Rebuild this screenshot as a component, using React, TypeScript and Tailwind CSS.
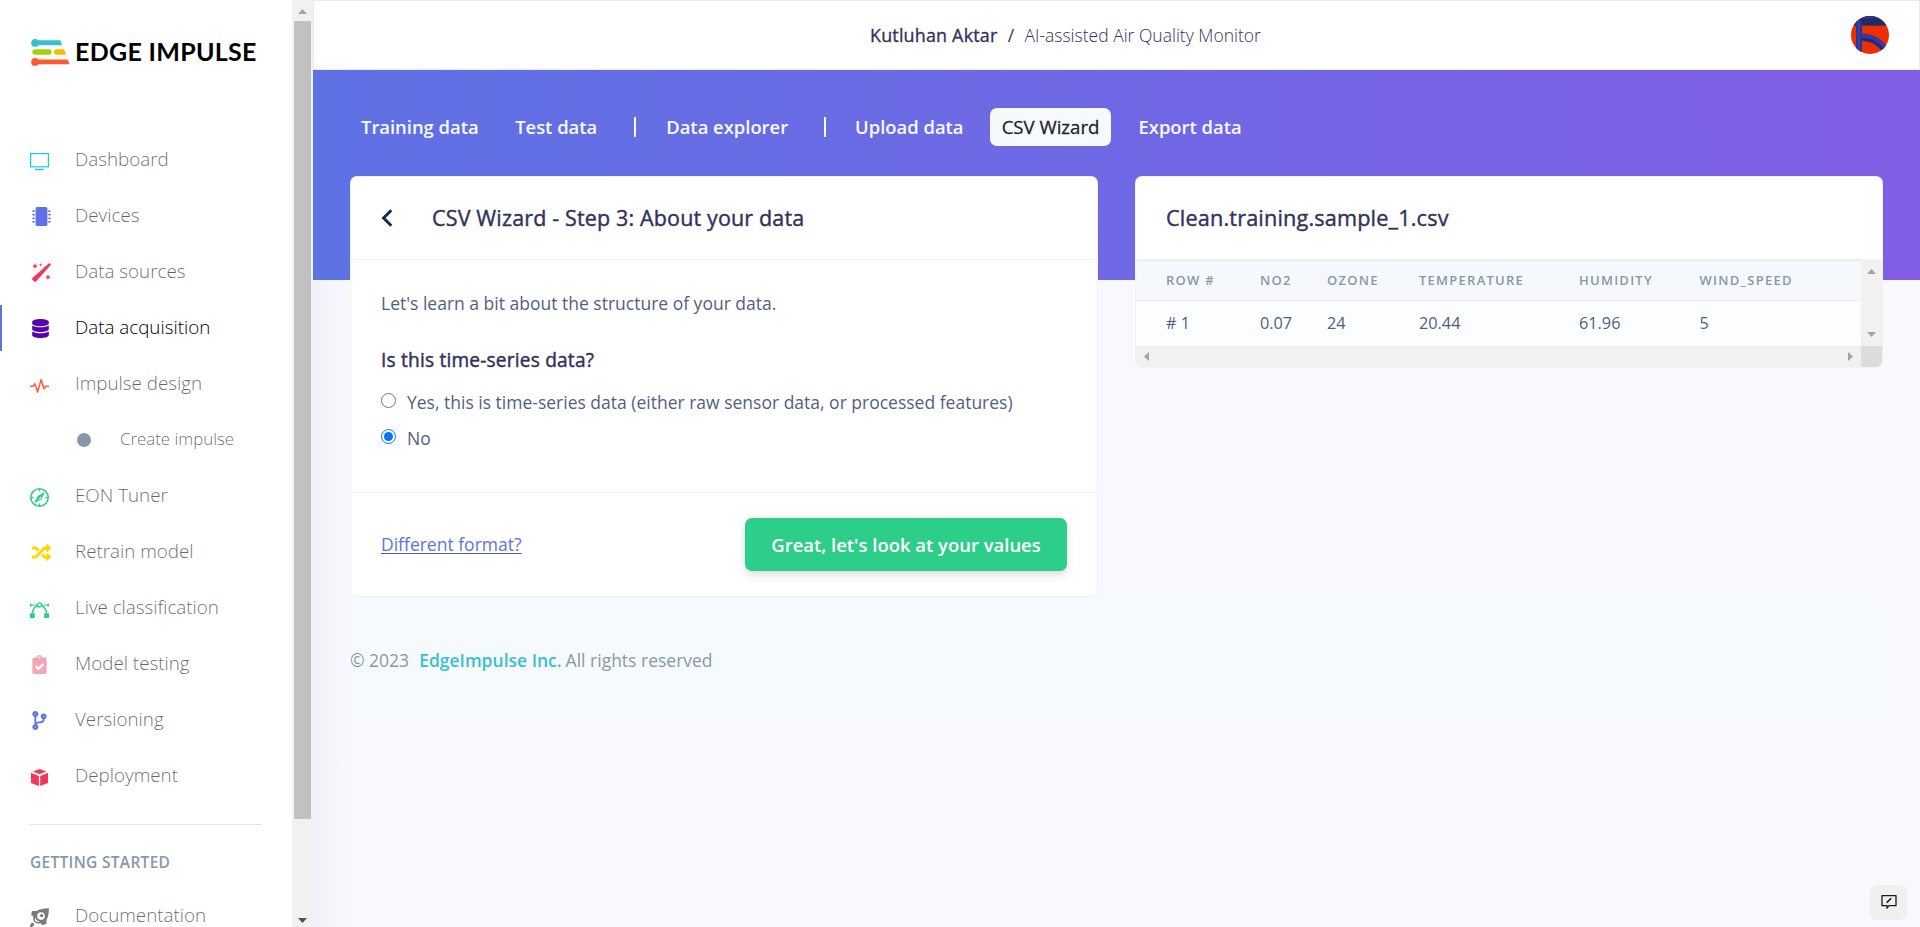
import type { ReactNode } from "react";
import {
  FaClipboardCheck,
  FaCodeBranch,
  FaDatabase,
  FaMicrochip,
  FaRandom,
} from "react-icons/fa";

const TvIcon = () => (
  <svg className="mt-[3px] h-[18px] w-[19px] shrink-0" viewBox="0 0 19 18" fill="none" stroke="#11cdef">
    <rect x="0.6" y="0.6" width="17.8" height="13.2" strokeWidth="1.2" />
    <path d="M5 16.6h9" strokeWidth="1.3" />
  </svg>
);

const WandIcon = () => (
  <svg className="ml-[2px] size-[19px] shrink-0" viewBox="0 0 19 19" fill="#f5365c">
    <path d="M17.3 0 19 1.700 4 18.500a1.200 1.200 0 0 1-1.700 0L.4 16.700a1.200 1.200 0 0 1 0-1.700Z" />
    <path d="m3 .2.900 2 2 .9-2 .9L3 6l-.9-2-2-.9 2-.9ZM8.500 0l.5 1.200 1.200.5L9 2.200l-.5 1.200L8 2.200l-1.200-.5L8 1.200ZM16 11.200l.9 2 2 .9-2 .9-.9 2-.9-2-2-.9 2-.9Z" />
  </svg>
);

const PulseIcon = () => (
  <svg className="mt-[3px] h-[16px] w-[19px] shrink-0" viewBox="0 0 19 16" fill="none" stroke="#fb6340" strokeWidth="1.6" strokeLinejoin="round">
    <path d="M0 8.3h3.1L4.9 5.8 7.6 14 11.1 1.6l2.8 9.2 1.9-2.5H19" />
  </svg>
);

const CompassIcon = () => (
  <svg className="mt-[3px] h-[19px] w-[19px] shrink-0" viewBox="0 0 19 19" fill="none" stroke="#2dce89">
    <circle cx="9.5" cy="9.5" r="8.7" strokeWidth="1.6" />
    <path d="M9.5 1v2.6M9.5 15.4V18M1 9.5h2.6M15.4 9.5H18" strokeWidth="1.2" />
    <path d="M13.9 5.1 8 8 5.1 13.9Z" fill="#2dce89" strokeWidth="0.8" strokeLinejoin="round" />
    <path d="M13.9 5.1 11 11 5.1 13.9Z" strokeWidth="1.1" strokeLinejoin="round" />
  </svg>
);

const VectorIcon = () => (
  <svg className="mt-[3px] h-[16px] w-[19px] shrink-0" viewBox="0 0 19 16" fill="none" stroke="#2dce89">
    <circle cx="9.5" cy="2.9" r="2.1" strokeWidth="1.3" />
    <path d="M1 3.1h6.4M11.6 3.1H18" strokeWidth="1" />
    <path d="M0 1.7h1.6v2.8H0zM17.4 1.7H19v2.8h-1.6zM0 11.2h4.8V16H0zM14.2 11.2H19V16h-4.8z" fill="#2dce89" stroke="none" />
    <path d="M2.4 11.5C2.6 7.6 4.6 4.8 7.6 3.9M16.6 11.5c-.2-3.9-2.2-6.7-5.2-7.6" strokeWidth="1.5" />
  </svg>
);

const BoxIcon = () => (
  <svg className="ml-px mt-[3px] h-[17px] w-[17px] shrink-0" viewBox="0 0 17 17" fill="#f5365c">
    <path d="M8.5 0 15.2 2.5 8.5 5.3 1.8 2.5ZM0 3.7l7.9 3.3v10L.5 14.3a.8.8 0 0 1-.5-.8ZM17 3.7 9.2 7v10l7.3-2.7a.8.8 0 0 0 .5-.8Z" />
  </svg>
);

const RocketIcon = () => (
  <svg className="mt-[3px] h-[19px] w-[19px] shrink-0" viewBox="0 0 19 19" fill="#7a7a7a">
    <path
      fillRule="evenodd"
      d="M18.9.2C13.6.2 9.6 1 6.6 2.9L1.9 2.9 1.2 7.6l2.1.4c-.5 2.5-.1 4.7 1.3 6.2 1.8 1.4 4.3 1.700 6.5 1.100l.7 2 4.600-1.300.1-4.300C18.200 9.200 18.900 5.400 18.900.2ZM11 4.300a3.800 3.800 0 1 1 0 7.600 3.800 3.800 0 0 1 0-7.600ZM5.200 9.300c.4 2.300 2 3.900 4.600 4.400-2.200.5-3.500.2-4.300-.5-.7-.9-.8-2.300-.3-3.900Z"
    />
    <circle cx="11.6" cy="7.6" r="1.7" />
    <path d="M.1 18.9c0-2 .6-3.700 2-4.200 1.500-.2 2.400 1 2 2.200-.5 1.400-2 2-4 2Z" />
  </svg>
);

const navItems: { label: string; icon: ReactNode; active?: boolean; sub?: boolean }[] = [
  { label: "Dashboard", icon: <TvIcon /> },
  { label: "Devices", icon: <FaMicrochip className="ml-[2px] size-[19px] shrink-0 text-[#5e72e4]" /> },
  { label: "Data sources", icon: <WandIcon /> },
  { label: "Data acquisition", icon: <FaDatabase className="ml-[2px] h-[19px] w-[17px] shrink-0 text-[#5603ad]" />, active: true },
  { label: "Impulse design", icon: <PulseIcon /> },
  { label: "Create impulse", icon: null, sub: true },
  { label: "EON Tuner", icon: <CompassIcon /> },
  { label: "Retrain model", icon: <FaRandom className="ml-[2px] size-[19px] shrink-0 text-[#ffd600]" /> },
  { label: "Live classification", icon: <VectorIcon /> },
  { label: "Model testing", icon: <FaClipboardCheck className="ml-[2px] h-[19px] w-[15px] shrink-0 text-[#f3a4b5]" /> },
  { label: "Versioning", icon: <FaCodeBranch className="ml-[2px] h-[19px] w-[15px] shrink-0 text-[#5e72e4]" /> },
  { label: "Deployment", icon: <BoxIcon /> },
];

function Logo() {
  return (
    <div className="flex h-[132px] shrink-0 items-start pl-[31px] pt-[36px]">
      <svg className="mt-[3px] h-[27px] w-[39px]" viewBox="0 0 39 27">
        <circle cx="4.1" cy="3.9" r="3.9" fill="#3bbfce" />
        <path d="M4 1.2h25.3l1.8 5H4Z" fill="#3bbfce" />
        <rect x="1.3" y="10.3" width="19.4" height="5.5" rx="2.7" fill="#a4d00c" />
        <path d="M25.7 10.3h7.3l2.1 5.5h-9.4a2.75 2.75 0 0 1 0-5.5Z" fill="#ffb900" />
        <circle cx="4.1" cy="22.9" r="3.9" fill="#ff5a30" />
        <path d="M4 20.4h32.7l1.9 4.9H4Z" fill="#ff5a30" />
      </svg>
      <span className="-mt-px ml-[5px] whitespace-nowrap font-['Lato',sans-serif] text-[25px] font-bold leading-[33px] tracking-[0.3px] text-black">EDGE IMPULSE</span>
    </div>
  );
}

function NavRow({ label, icon, active, sub }: { label: string; icon: ReactNode; active?: boolean; sub?: boolean }) {
  if (sub) {
    return (
      <div className="flex h-14 shrink-0 items-center pl-[77px]">
        <span className="size-[14px] rounded-full bg-[#8898aa]" />
        <span className="ml-[29px] pb-[2px] text-[16.875px] font-light text-black/60">{label}</span>
      </div>
    );
  }
  return (
    <div className="flex h-14 shrink-0 items-center">
      <span className={active ? "h-[46px] w-[2px] bg-[#5e72e4]" : "h-[46px] w-[2px]"} />
      <span className="flex w-[73px] pl-[28px]">{icon}</span>
      <span className={active ? "pb-[2px] text-[18.8px] font-light text-black" : "pb-[2px] text-[18.8px] font-light text-black/60"}>{label}</span>
    </div>
  );
}

function Sidebar() {
  return (
    <aside className="flex h-full w-[292px] shrink-0 flex-col overflow-hidden bg-white">
      <Logo />
      {navItems.map((item) => (
        <NavRow key={item.label} {...item} />
      ))}
      <hr className="ml-[30px] mr-[30px] mt-5 shrink-0 border-[#e5e5e5]" />
      <div className="mt-[26px] shrink-0 pl-[30px] text-[15.5px] font-semibold uppercase leading-[22px] tracking-[0.3px] text-[#8898aa]">Getting started</div>
      <div className="mt-[15px] shrink-0">
        <NavRow label="Documentation" icon={<RocketIcon />} />
      </div>
    </aside>
  );
}

function SidebarScrollbar() {
  return (
    <div className="flex h-full w-[21px] shrink-0 flex-col bg-[#f1f1f1]">
      <svg className="h-[21px] w-[21px] shrink-0" viewBox="0 0 21 21">
        <path d="M6 14h9L10.5 9Z" fill="#a3a3a3" />
      </svg>
      <div className="ml-[2px] h-[798px] w-[17px] bg-[#c1c1c1]" />
      <svg className="mt-auto h-[21px] w-[21px] shrink-0" viewBox="0 0 21 21">
        <path d="M6 12h9l-4.5 5Z" fill="#505050" />
      </svg>
    </div>
  );
}

function TopBar() {
  return (
    <header className="flex h-[70px] shrink-0 items-center border border-[#e9ecef] bg-white pr-[30px] text-[17.5px] text-[#32325d]">
      <div className="flex flex-1 items-baseline whitespace-nowrap pl-[556px]">
        <span className="text-[17.9px] tracking-[0.2px] [-webkit-text-stroke:0.35px]">Kutluhan Aktar</span>
        <span className="w-[27px] text-center">/</span>
        <span className="font-light">AI-assisted Air Quality Monitor</span>
      </div>
      <svg className="size-[38px]" viewBox="0 0 38 38">
        <defs>
          <clipPath id="avatar">
            <circle cx="19" cy="19" r="19" />
          </clipPath>
        </defs>
        <g clipPath="url(#avatar)">
          <rect width="38" height="38" fill="#ec2f00" />
          <rect width="38" height="9.7" fill="#232b66" />
          <rect width="38" height="2.6" fill="#2c3598" />
          <path d="M10 21.5c9-.6 17.5 3.3 23.5 11.5" fill="none" stroke="#222a78" strokeWidth="7" />
          <path d="M10 20c9-.6 18 3.3 24 11.5" fill="none" stroke="#3039ae" strokeWidth="3.5" />
          <rect x="5" y="5" width="6" height="33" fill="#2a3391" />
          <rect x="6.5" y="5" width="2.5" height="33" fill="#343eaa" />
        </g>
      </svg>
    </header>
  );
}

function Tab({ children, active }: { children: ReactNode; active?: boolean }) {
  return (
    <span
      className={
        active
          ? "ml-px mr-[2px] flex h-[38px] w-[121px] items-center justify-center rounded-[7px] bg-[#f7fafc] text-[18.6px] font-normal text-[#212529] [-webkit-text-stroke:0.3px]"
          : "flex h-[38px] items-center px-[11px] text-[#f7fafc]"
      }
    >
      {children}
    </span>
  );
}

function Tabs() {
  return (
    <nav className="flex h-[38px] items-center gap-[14.5px] whitespace-nowrap text-[18.4px] font-semibold">
      <Tab>Training data</Tab>
      <Tab>Test data</Tab>
      <span className="ml-[11px] mr-[5px] h-5 w-[2px] bg-[#f7fafc]" />
      <Tab>Data explorer</Tab>
      <span className="ml-[10px] mr-[4px] h-5 w-[2px] bg-[#f7fafc]" />
      <Tab>Upload data</Tab>
      <Tab active>CSV Wizard</Tab>
      <Tab>Export data</Tab>
    </nav>
  );
}

function WizardCard() {
  return (
    <section className="flex h-[421px] w-[748px] flex-col rounded-[7px] border border-black/5 bg-white">
      <div className="flex h-[83px] items-center border-b border-black/5 pl-[30px] text-[#32325d]">
        <svg className="h-[18px] w-[12px]" viewBox="0 0 12 18" fill="none" stroke="#172b4d" strokeWidth="3">
          <path d="M10.3 1.2 2.6 9l7.700 7.800" />
        </svg>
        <h3 className="ml-[39px] text-[21.5px] tracking-[0.15px] [-webkit-text-stroke:0.4px]">CSV Wizard - Step 3: About your data</h3>
      </div>
      <div className="flex h-[233px] flex-col border-b border-black/5 px-[30px] pt-[30px]">
        <p className="leading-[26px]">Let's learn a bit about the structure of your data.</p>
        <h4 className="mt-[31px] text-[19.1px] leading-[26px] tracking-[0.2px] text-[#32325d] [-webkit-text-stroke:0.45px]">Is this time-series data?</h4>
        <label className="mt-[16px] flex h-[26px] items-start leading-[26px]">
          <input type="radio" name="series" className="m-0 mt-[4px] size-[15px]" readOnly />
          <span className="ml-[11px]">Yes, this is time-series data (either raw sensor data, or processed features)</span>
        </label>
        <label className="mt-[10px] flex h-[26px] items-start leading-[26px]">
          <input type="radio" name="series" className="m-0 mt-[4px] size-[15px]" defaultChecked />
          <span className="ml-[11px]">No</span>
        </label>
      </div>
      <div className="flex flex-1 items-center justify-between px-[30px]">
        <a className="text-[#5e72e4] underline decoration-[#525f7f] decoration-1 underline-offset-2">Different format?</a>
        <button className="h-[53px] w-[322px] rounded-[7px] bg-[#2dce89] pt-px text-[18.45px] font-semibold text-white shadow-[0_5px_8px_rgba(50,50,93,0.11),0_1px_4px_rgba(0,0,0,0.08)]">
          Great, let's look at your values
        </button>
      </div>
    </section>
  );
}

const columns = ["Row #", "NO2", "ozone", "temperature", "humidity", "wind_speed"];
const values = ["# 1", "0.07", "24", "20.44", "61.96", "5"];

function SampleCard() {
  return (
    <section className="flex h-[192px] w-[748px] flex-col overflow-hidden rounded-[7px] border border-black/5 bg-white">
      <h3 className="flex h-[82px] shrink-0 items-center pl-[30px] text-[21.7px] tracking-[0.15px] text-[#32325d] [-webkit-text-stroke:0.4px]">Clean.training.sample_1.csv</h3>
      <div className="flex h-[87px] shrink-0 border-t border-black/5">
        <div className="flex-1">
          <div className="grid h-[41px] grid-cols-[94px_67px_92px_160px_120.5px_1fr] items-center border-y border-[#e9ecef] bg-[#f6f9fc] pl-[30px] text-[13px] font-semibold uppercase tracking-[1.25px] text-[#8898aa]">
            {columns.map((c) => (
              <span key={c}>{c}</span>
            ))}
          </div>
          <div className="grid h-[45px] grid-cols-[94px_67px_92px_160px_120.5px_1fr] items-center bg-[#fcfdff] pl-[30px] text-[16.25px]">
            {values.map((v) => (
              <span key={v}>{v}</span>
            ))}
          </div>
        </div>
        <svg className="h-full w-[21px] shrink-0 bg-[#f1f1f1]" viewBox="0 0 21 86">
          <path d="M6 14h9l-4.5-5ZM6 72h9l-4.5 5Z" fill="#a3a3a3" />
        </svg>
      </div>
      <div className="flex h-[21px] shrink-0 justify-between bg-[#f1f1f1]">
        <svg className="size-[21px]" viewBox="0 0 21 21">
          <path d="M13 6v9l-5-4.5Z" fill="#a3a3a3" />
        </svg>
        <div className="flex">
          <svg className="size-[21px]" viewBox="0 0 21 21">
            <path d="M8 6v9l5-4.5Z" fill="#a3a3a3" />
          </svg>
          <span className="size-[21px] bg-[#dcdcdc]" />
        </div>
      </div>
    </section>
  );
}

export default function App() {
  return (
    <div className="flex h-[927px] w-[1920px] overflow-hidden bg-[#f8f9fe] font-['Open_Sans',sans-serif] text-[17.5px] text-[#525f7f]">
      <Sidebar />
      <SidebarScrollbar />
      <div className="flex flex-1 flex-col bg-[linear-gradient(90deg,rgba(136,152,170,0.08),transparent_36px)]">
        <TopBar />
        <div className="h-[210px] shrink-0 bg-[linear-gradient(87deg,#5e72e4,#825ee4)] px-[37px] pt-[38px]">
          <Tabs />
          <div className="mt-[30px] flex items-start justify-between">
            <WizardCard />
            <SampleCard />
          </div>
        </div>
        <footer className="mx-[37px] mt-[317px] flex h-[127px] items-center bg-[#f7fafc] text-[#8898aa]">
          <span>© 2023</span>
          <a className="ml-[10px] mr-[4px] font-semibold text-[#3bbfce]">EdgeImpulse Inc.</a>
          <span>All rights reserved</span>
        </footer>
      </div>
      <button className="fixed bottom-[7px] right-[13px] flex h-[35px] w-[37px] items-center justify-center rounded-[7px] bg-[#f0f0f0]">
        <svg className="-mt-px size-[16px]" viewBox="0 0 16 16" fill="none" stroke="#1a1a1a" strokeWidth="1.3">
          <path d="M1 1.7h14v10H8l-2 2.5v-2.5H1Z" strokeLinejoin="round" />
          <path d="m5.7 8.6 4.5-4.4" strokeWidth="1.6" />
        </svg>
      </button>
    </div>
  );
}
